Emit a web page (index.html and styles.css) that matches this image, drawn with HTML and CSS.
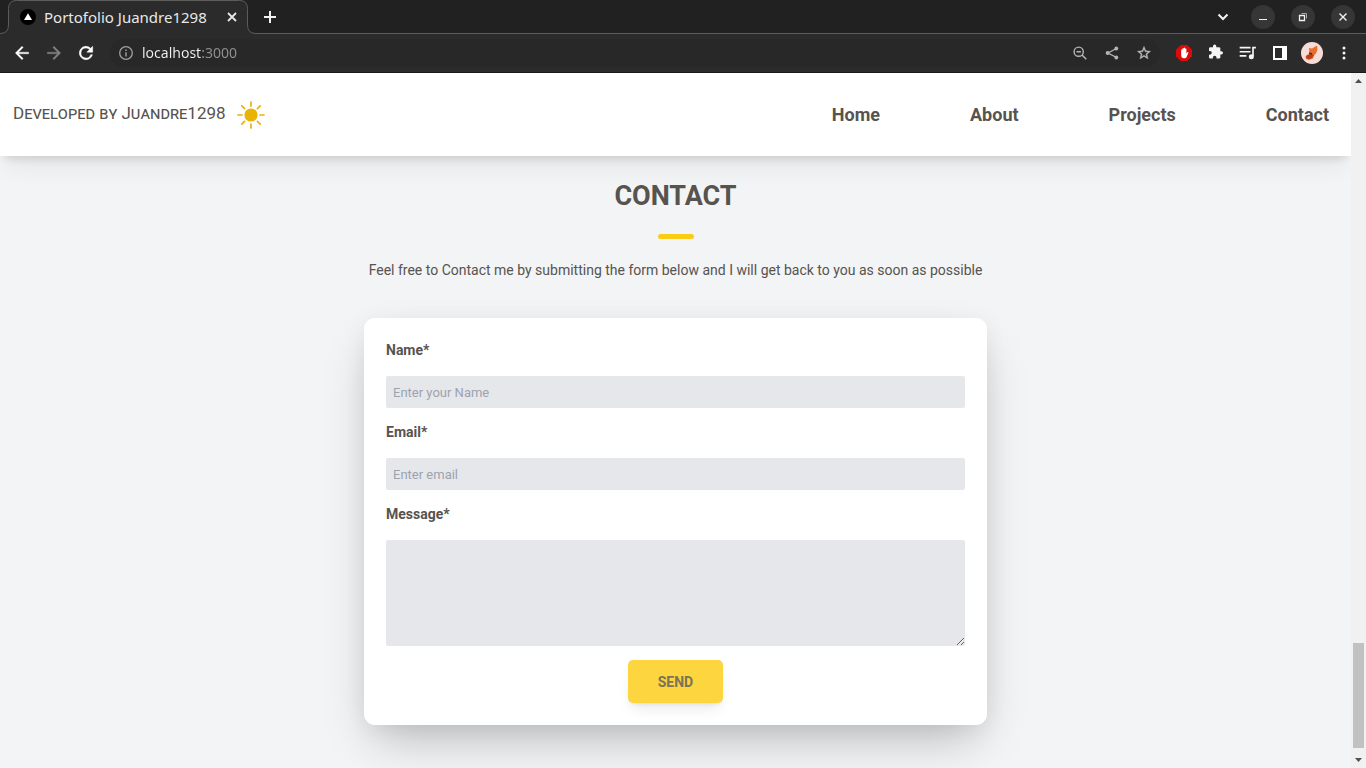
FILE: index.html
```html
<!DOCTYPE html>
<html lang="en">
<head>
<meta charset="utf-8">
<meta name="viewport" content="width=device-width, initial-scale=1">
<title>Portofolio Juandre1298</title>
<link rel="stylesheet" href="styles.css">
</head>
<body>
<div class="browser">
  <div class="tabstrip">
    <div class="tab">
      <svg class="tab-shape" viewBox="0 0 256 34" aria-hidden="true"><path d="M0 33.5Q8.500 33.500 8.500 25V8.500Q8.500 .5 16.500 .5H239.500Q247.500 .5 247.500 8.500V25Q247.500 33.500 256 33.500V34H0Z" fill="#2b2b2b"/><path d="M0 33.500Q8.500 33.500 8.500 25V8.500Q8.500 .5 16.500 .5H239.500Q247.500 .5 247.500 8.500V25Q247.500 33.500 256 33.500" fill="none" stroke="#5c5c5c"/></svg>
      <svg class="favicon" viewBox="0 0 16 16" aria-hidden="true"><circle cx="8" cy="8" r="8" fill="#000"/><path d="M8 4.200 12 11H4Z" fill="#fff"/></svg>
      <span class="tab-title">Portofolio Juandre1298</span>
      <button class="tab-close" aria-label="Close tab"><svg viewBox="0 0 16 16"><path d="M4 4l8 8M12 4l-8 8" stroke="#e8e8e8" stroke-width="1.800"/></svg></button>
    </div>
    <button class="new-tab" aria-label="New tab"><svg viewBox="0 0 16 16"><path d="M8 2v12M2 8h12" stroke="#f2f2f2" stroke-width="2"/></svg></button>
    <div class="window-buttons">
      <button aria-label="Search tabs"><svg viewBox="0 0 16 16"><path d="M3.500 5.500 8 10l4.500-4.500" fill="none" stroke="#f2f2f2" stroke-width="2"/></svg></button>
      <button class="round" aria-label="Minimize"><svg viewBox="0 0 16 16"><path d="M4 10.500h8" stroke="#f2f2f2"/></svg></button>
      <button class="round" aria-label="Restore"><svg viewBox="0 0 16 16"><path d="M4.500 6.500h5v5h-5z" fill="none" stroke="#f2f2f2" stroke-width="1.300"/><path d="M6.500 4.500h5v5" fill="none" stroke="#a8a8a8"/></svg></button>
      <button class="round" aria-label="Close"><svg viewBox="0 0 16 16"><path d="M4.500 4.500l7 7M11.500 4.500l-7 7" stroke="#f2f2f2" stroke-width="1.400"/></svg></button>
    </div>
  </div>

  <div class="toolbar">
    <button class="tool" aria-label="Back"><svg viewBox="0 0 24 24"><path d="M20 11H7.800l5.600-5.600L12 4l-8 8 8 8 1.400-1.400L7.800 13H20z" fill="#fff" stroke="#fff" stroke-width=".4"/></svg></button>
    <button class="tool" aria-label="Forward"><svg viewBox="0 0 24 24"><path d="M4 11h12.200l-5.600-5.600L12 4l8 8-8 8-1.400-1.400 5.600-5.600H4z" fill="#838383" stroke="#838383" stroke-width=".4"/></svg></button>
    <button class="tool" aria-label="Reload"><svg viewBox="0 0 24 24"><path d="M17.650 6.350A8 8 0 1 0 19.730 14h-2.080A6 6 0 1 1 12 6c1.660 0 3.140.690 4.220 1.780L13 11h7V4z" fill="#fff" stroke="#fff" stroke-width=".6"/></svg></button>
    <div class="omnibox">
      <button class="tool" aria-label="Site information"><svg class="small" viewBox="0 0 16 16"><circle cx="8" cy="8" r="6.300" fill="none" stroke="#a0a0a0" stroke-width="1.300"/><path d="M8 7.200V11.500M8 4.500V6" stroke="#a0a0a0" stroke-width="1.400"/></svg></button>
      <input class="address" aria-label="Address" value="localhost:3000">
      <button class="tool" aria-label="Zoom"><svg class="small" viewBox="0 0 16 16"><circle cx="6.700" cy="6.700" r="4.600" fill="none" stroke="#b5b5b5" stroke-width="1.400"/><path d="M10 10l4.300 4.300M4.500 6.700h4.400" stroke="#b5b5b5" stroke-width="1.500"/></svg></button>
      <button class="tool" aria-label="Share"><svg class="small" viewBox="0 0 16 16"><path d="M12.500 3.500 4 8l8.500 4.500" fill="none" stroke="#b5b5b5" stroke-width="1.400"/><g fill="#b5b5b5"><circle cx="12.300" cy="3.500" r="1.900"/><circle cx="3.600" cy="8" r="1.900"/><circle cx="12.300" cy="12.500" r="1.900"/></g></svg></button>
      <button class="tool" aria-label="Bookmark"><svg class="small" viewBox="0 0 24 24"><path d="M22 9.240l-7.190-.620L12 2 9.190 8.630 2 9.240l5.460 4.730L5.820 21 12 17.270 18.180 21l-1.630-7.030zM12 15.400l-3.760 2.270 1-4.280-3.320-2.880 4.380-.380L12 6.100l1.710 4.040 4.380.380-3.320 2.880 1 4.280z" fill="#bdbdbd" stroke="#bdbdbd" stroke-width=".5"/></svg></button>
    </div>
    <button class="tool" aria-label="Ad blocker"><svg class="small" viewBox="0 0 16 16"><path d="M4.700 0h6.600L16 4.700v6.600L11.300 16H4.700L0 11.300V4.700z" fill="#d90b0b"/><path d="M5.200 8.500V4.800q.6-.8 1.200 0V3.600q.7-.8 1.300 0V3q.7-.8 1.400 0v.8q.7-.7 1.300 0v4.600l.9-1.200q.8-.5 1.200.2L10.600 12Q10 13.200 8.800 13.200H7.500Q5.200 13 5.200 10.500Z" fill="#fff"/></svg></button>
    <button class="tool" aria-label="Extensions"><svg viewBox="0 0 24 24"><path d="M20.500 11H19V7a2 2 0 0 0-2-2h-4V3.500a2.500 2.500 0 0 0-5 0V5H4a2 2 0 0 0-2 2v3.800h1.500a2.700 2.700 0 0 1 0 5.400H2V20a2 2 0 0 0 2 2h3.800v-1.500a2.700 2.700 0 0 1 5.400 0V22H17a2 2 0 0 0 2-2v-4h1.500a2.500 2.500 0 0 0 0-5z" fill="#f5f5f5" transform="translate(2 1) scale(.8)"/></svg></button>
    <button class="tool" aria-label="Media controls"><svg viewBox="0 0 24 24"><path d="M2 5.500h13M2 10.500h13M2 15.500h8" stroke="#f5f5f5" stroke-width="2"/><path d="M21.500 5.500H18V16" fill="none" stroke="#f5f5f5" stroke-width="2"/><circle cx="16" cy="16.500" r="3" fill="#f5f5f5"/></svg></button>
    <button class="tool" aria-label="Side panel"><svg class="small" viewBox="0 0 16 16"><path d="M1 1h14v14H1zM3 3v10h7V3z" fill="#fff" fill-rule="evenodd"/></svg></button>
    <button class="tool" aria-label="Profile"><svg class="avatar" viewBox="0 0 22 22"><circle cx="11" cy="11" r="11" fill="#f8dcd8"/><path d="M8 6 11 6.500l5-3 .5 4-1.500 4-2 2-1 3-4 1.500-3-1-.5-3 4-2z" fill="#e8702c"/><path d="M6 13l4-1 3 1-2 3-3 1-3-1z" fill="#b8401a"/><path d="M8 11l3 1" stroke="#5f2514" stroke-width="1.500"/></svg></button>
    <button class="tool" aria-label="Menu"><svg class="small" viewBox="0 0 16 16" fill="#f5f5f5"><circle cx="8" cy="3" r="1.500"/><circle cx="8" cy="8" r="1.500"/><circle cx="8" cy="13" r="1.500"/></svg></button>
  </div>

  <div class="viewport">
    <div class="page">
      <header class="site-header">
        <a class="brand" href="#home">Developed by Juandre1298</a>
        <button class="theme" aria-label="Toggle theme"><svg viewBox="0 0 28 28"><circle cx="14" cy="14" r="6.600" fill="#eab308"/><path d="M14 1v4M14 23v4M1 14h4M23 14h4M4.800 4.800l2.800 2.800M20.400 20.400l2.800 2.800M4.800 23.200l2.800-2.800M20.400 7.600l2.800-2.800" stroke="#eab308" stroke-width="1.700" stroke-linecap="round"/></svg></button>
        <nav class="site-nav">
          <a href="#home">Home</a>
          <a href="#about">About</a>
          <a href="#projects">Projects</a>
          <a href="#contact">Contact</a>
        </nav>
      </header>
      <main class="contact" id="contact">
        <h1>CONTACT</h1>
        <div class="accent"></div>
        <p class="intro">Feel free to Contact me by submitting the form below and I will get back to you as soon as possible</p>
        <form class="card">
          <div class="field">
            <label for="name">Name*</label>
            <input id="name" type="text" placeholder="Enter your Name">
          </div>
          <div class="field">
            <label for="email">Email*</label>
            <input id="email" type="email" placeholder="Enter email">
          </div>
          <div class="field">
            <label for="message">Message*</label>
            <textarea id="message"></textarea>
          </div>
          <button class="send" type="button">SEND</button>
        </form>
      </main>
    </div>
    <div class="scrollbar" aria-hidden="true">
      <svg viewBox="0 0 15 16"><path d="M7.500 6 11 10H4z" fill="#505050"/></svg>
      <div class="thumb"></div>
      <svg viewBox="0 0 15 16"><path d="M4 6h7l-3.500 4z" fill="#505050"/></svg>
    </div>
  </div>
</div>
</body>
</html>
```
FILE: styles.css
```css
* {
  box-sizing: border-box;
}

body {
  margin: 0;
  font-family: Roboto, "Liberation Sans", sans-serif;
  font-size: 14px;
  color: #57534e;
}

button {
  padding: 0;
  border: 0;
  background: none;
  font: inherit;
  color: inherit;
}

a {
  color: inherit;
  text-decoration: none;
}

svg {
  display: block;
}

.browser {
  display: flex;
  flex-direction: column;
  height: 100vh;
  overflow: hidden;
}

/* Tab strip */
.tabstrip {
  display: flex;
  align-items: center;
  height: 34px;
  flex: none;
  background: #212121;
  border-bottom: 1px solid #5c5c5c;
}

.tab {
  position: relative;
  display: flex;
  align-items: center;
  width: 256px;
  height: 34px;
  padding: 0 16px 0 20px;
  color: #e8e8e8;
  font-family: "Noto Sans", sans-serif;
  font-size: 15px;
}

.tab > * {
  position: relative;
}

.tab .tab-shape {
  position: absolute;
  top: 0;
  left: 0;
  width: 256px;
  height: 34px;
}

.favicon {
  width: 16px;
  height: 16px;
}

.tab-title {
  flex: 1;
  margin-left: 8px;
  white-space: nowrap;
}

.tab-close svg,
.new-tab svg,
.window-buttons svg {
  width: 16px;
  height: 16px;
}

.new-tab {
  margin-left: 6px;
}

.window-buttons {
  display: flex;
  gap: 16px;
  margin-left: auto;
  padding-right: 11px;
}

.window-buttons button {
  display: flex;
  align-items: center;
  justify-content: center;
  width: 24px;
  height: 24px;
  border-radius: 50%;
}

.window-buttons .round {
  background: #363636;
}

/* Toolbar */
.toolbar {
  display: flex;
  align-items: center;
  height: 39px;
  flex: none;
  padding: 0 6px;
  background: #2b2b2b;
  border-bottom: 1px solid #1a1a1a;
}

.tool {
  display: flex;
  align-items: center;
  justify-content: center;
  width: 32px;
  height: 28px;
  flex: none;
}

.tool svg {
  width: 20px;
  height: 20px;
}

.tool .small {
  width: 16px;
  height: 16px;
}

.tool .avatar {
  width: 22px;
  height: 22px;
}

.omnibox {
  display: flex;
  align-items: center;
  flex: 1;
  height: 28px;
  margin: 0 8px;
  border-radius: 14px;
  background: #282828;
}

.address {
  flex: 1;
  min-width: 0;
  padding: 0 0 2px;
  border: 0;
  outline: 0;
  background: linear-gradient(90deg, #f2f2f2 60px, #929292 60px);
  background-clip: text;
  color: transparent;
  font-family: "Noto Sans", sans-serif;
  font-size: 14px;
}

/* Page */
.viewport {
  display: flex;
  flex: 1;
  min-height: 0;
}

.page {
  flex: 1;
  overflow: hidden;
  background: #f3f4f6;
}

.site-header {
  display: flex;
  align-items: center;
  height: 83px;
  padding: 0 22px 0 13px;
  background: #fff;
  box-shadow: 0 18px 22px -5px rgba(0, 0, 0, 0.05), 0 7px 9px -5px rgba(0, 0, 0, 0.14);
}

.brand {
  padding-bottom: 3px;
  font-size: 17px;
  font-weight: 400;
  font-variant: small-caps;
  white-space: nowrap;
}

.theme {
  margin-left: 11px;
}

.theme svg {
  width: 28px;
  height: 28px;
}

.site-nav {
  display: flex;
  gap: 90px;
  margin-left: auto;
  font-size: 18px;
  font-weight: 700;
}

.contact {
  display: flex;
  flex-direction: column;
  align-items: center;
  padding-top: 22px;
}

h1 {
  margin: 0;
  font-size: 27px;
  line-height: 36px;
  font-weight: 700;
}

.accent {
  width: 36px;
  height: 5px;
  margin-top: 20px;
  border-radius: 4px;
  background: #facc15;
}

.intro {
  margin: 20px 0 37px;
  line-height: 22px;
}

.card {
  display: flex;
  flex-direction: column;
  gap: 14px;
  width: 100%;
  max-width: 623px;
  padding: 22px;
  border-radius: 11px;
  background: #fff;
  box-shadow: 0 22px 45px -11px rgba(0, 0, 0, 0.25), 0 4px 22px rgba(0, 0, 0, 0.05);
}

.field {
  display: flex;
  flex-direction: column;
  gap: 16px;
}

.field label {
  line-height: 20px;
  font-weight: 700;
}

.field input,
.field textarea {
  width: 100%;
  height: 32px;
  padding: 0 7px;
  border: 0;
  border-radius: 2px;
  background: #e5e7eb;
  color: inherit;
  font-family: inherit;
  font-size: 13px;
}

.field textarea {
  display: block;
  height: 106px;
  padding: 7px;
  resize: vertical;
}

.field ::placeholder {
  color: #9ca3af;
}

.send {
  align-self: center;
  height: 43px;
  padding: 0 30px;
  border-radius: 5px;
  background: #fcd53f;
  box-shadow: 0 9px 14px -3px rgba(0, 0, 0, 0.08), 0 4px 5px -4px rgba(0, 0, 0, 0.12);
  color: #7b7355;
  font-weight: 700;
}

/* Scrollbar */
.scrollbar {
  display: flex;
  flex-direction: column;
  width: 15px;
  flex: none;
  background: #f1f1f1;
}

.scrollbar svg {
  width: 15px;
  height: 16px;
}

.thumb {
  height: 105px;
  margin: auto 2px 4px;
  background: #c1c1c1;
}
```
